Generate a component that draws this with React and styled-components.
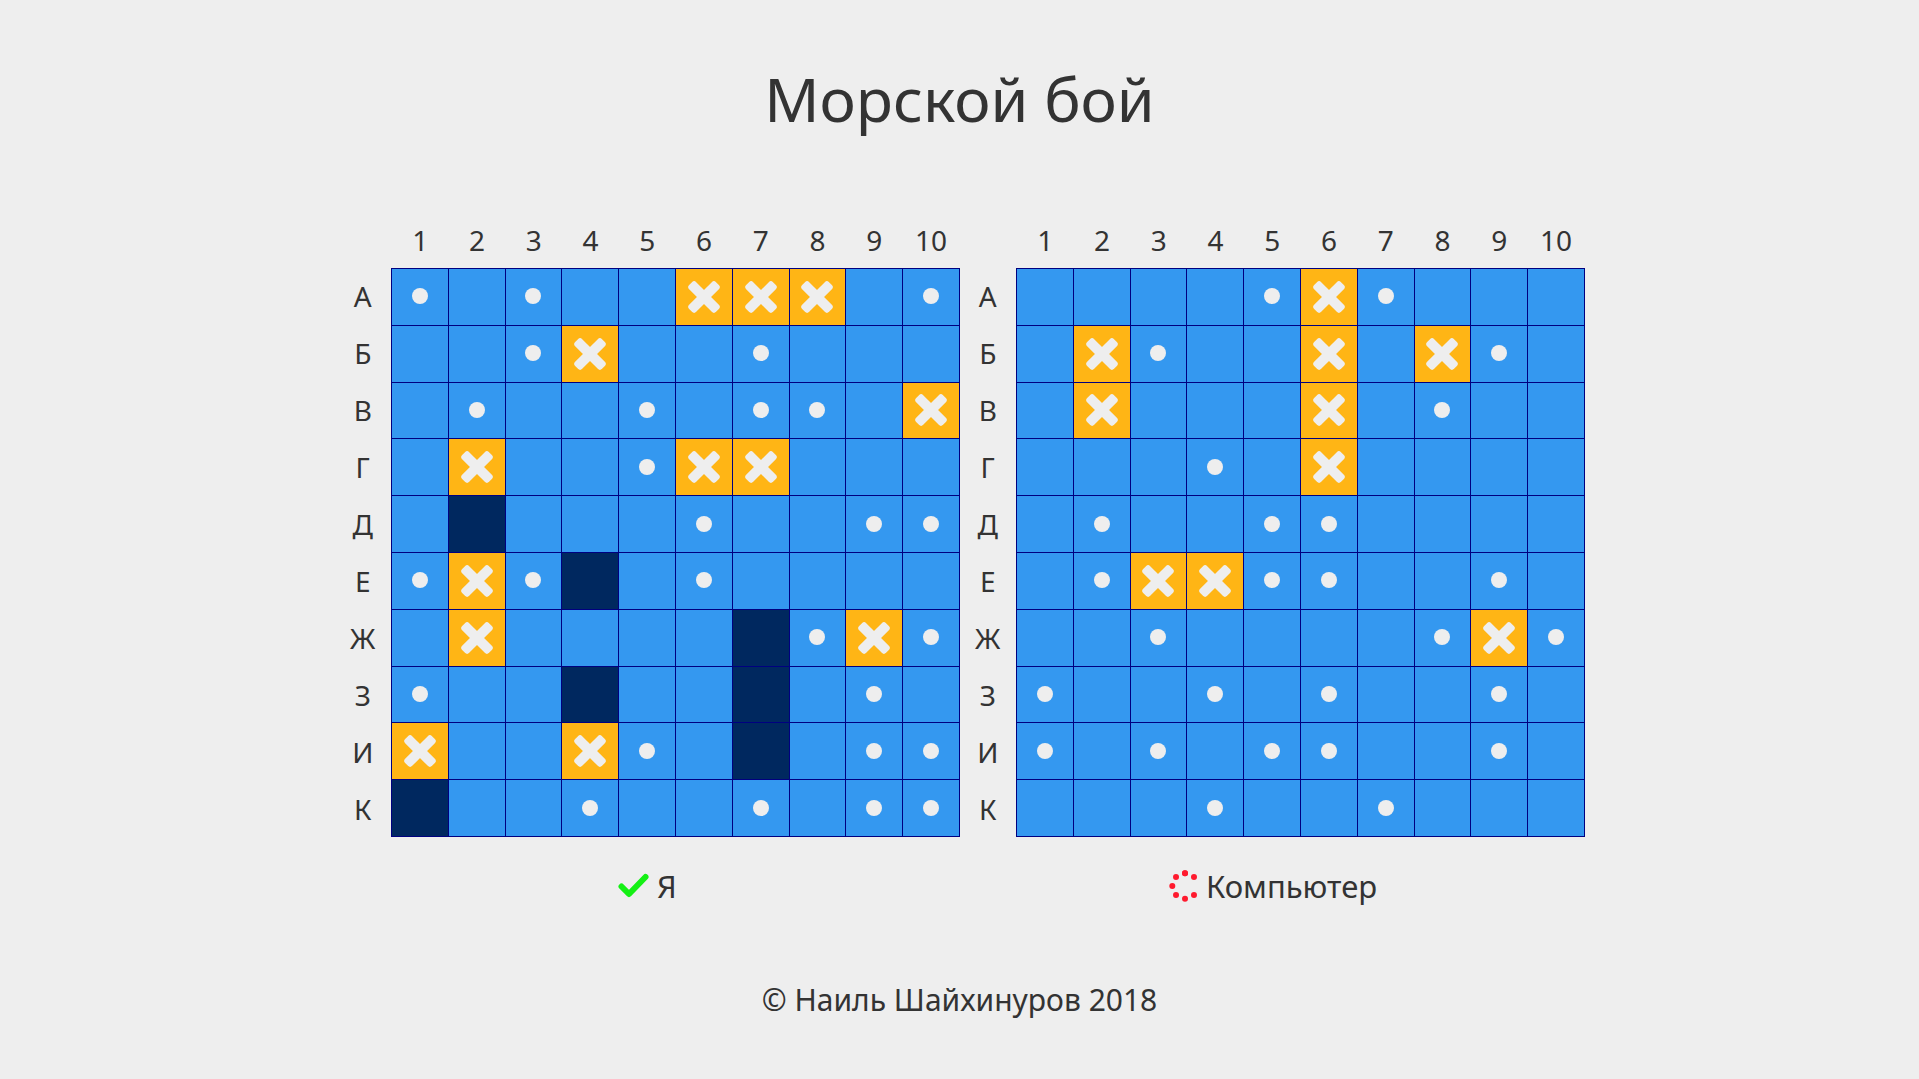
import styled, { createGlobalStyle } from "styled-components";

const COLUMNS = [1, 2, 3, 4, 5, 6, 7, 8, 9, 10];
const LETTERS = ["А", "Б", "В", "Г", "Д", "Е", "Ж", "З", "И", "К"];

const MY_FIELD = [
  "o.o..xxx.o",
  "..ox..o...",
  ".o..o.oo.x",
  ".x..oxx...",
  ".s...o..oo",
  "oxos.o....",
  ".x....soxo",
  "o..s..s.o.",
  "x..xo.s.oo",
  "s..o..o.oo",
];

const ENEMY_FIELD = [
  "....oxo...",
  ".xo..x.xo.",
  ".x...x.o..",
  "...o.x....",
  ".o..oo....",
  ".oxxoo..o.",
  "..o....oxo",
  "o..o.o..o.",
  "o.o.oo..o.",
  "...o..o...",
];

const CELL_COLORS = {
  ".": "#3498f0",
  o: "#3498f0",
  x: "#ffb515",
  s: "#00285f",
};

const SPINNER_DOTS = [45, 90, 135, 180, 225, 270, 315];

const GlobalStyle = createGlobalStyle`
  html, body {
    margin: 0;
    padding: 0;
    background: #eee;
  }
  body {
    color: #333;
    font-family: "Noto Sans", "Open Sans", sans-serif;
  }
`;

const Page = styled.div`
  display: flex;
  flex-direction: column;
  align-items: center;
  padding-top: 60px;
`;

const Title = styled.h1`
  margin: 0 0 71px;
  height: 80px;
  font-size: 61px;
  font-weight: 400;
  line-height: 78px;
`;

const Boards = styled.div`
  display: flex;
  width: 1250px;
`;

const Board = styled.section`
  display: grid;
  grid-template-columns: 56.5px 568.5px;
  grid-template-rows: 57px 569px auto;
  width: 625px;
`;

const Corner = styled.div``;

const Numbers = styled.div`
  display: grid;
  grid-template-columns: repeat(10, 1fr);
  padding-left: 1px;
`;

const Letters = styled.div`
  display: grid;
  grid-template-rows: repeat(10, 1fr);
`;

const Label = styled.div`
  display: flex;
  align-items: center;
  justify-content: center;
  font-size: 28px;
`;

const Field = styled.div`
  display: grid;
  grid-template-columns: repeat(10, 1fr);
  grid-template-rows: repeat(10, 1fr);
  width: 569px;
  border-top: 1px solid #000080;
  border-left: 1px solid #000080;
  box-sizing: border-box;
`;

const Cell = styled.div`
  display: flex;
  align-items: center;
  justify-content: center;
  background: ${(p) => CELL_COLORS[p.$kind]};
  border-right: 1px solid #000080;
  border-bottom: 1px solid #000080;
`;

const Dot = styled.span`
  width: 16px;
  height: 16px;
  margin-bottom: 1px;
  border-radius: 50%;
  background: #eee;
`;

const Status = styled.div`
  grid-column: 1 / 3;
  display: flex;
  align-items: center;
  justify-content: center;
  gap: 7px;
  height: 98px;
  padding-bottom: 2px;
  font-size: 31px;
`;

const CheckIcon = styled.svg`
  margin-right: 1px;
`;

const SpinnerIcon = styled.svg`
  margin: 0 -2px 0 2px;
`;

const Footer = styled.footer`
  margin-top: 43px;
  font-size: 30px;
  line-height: 40px;
`;

const Cross = () => (
  <svg width="34" height="34" viewBox="0 0 34 34">
    <g fill="#eee" transform="rotate(45 17 17)">
      <rect x="-2" y="12" width="38" height="10" rx="3" />
      <rect x="12" y="-2" width="10" height="38" rx="3" />
    </g>
  </svg>
);

const Check = () => (
  <CheckIcon width="32" height="26" viewBox="0 0 32 26">
    <path
      d="M4.5 13.5 L12 21 L28.5 4"
      fill="none"
      stroke="#14f014"
      strokeWidth="6"
      strokeLinecap="round"
      strokeLinejoin="round"
    />
  </CheckIcon>
);

const Spinner = () => (
  <SpinnerIcon width="32" height="32" viewBox="0 0 32 32">
    {SPINNER_DOTS.map((angle) => (
      <circle
        key={angle}
        cx={16 + 12.7 * Math.cos((angle * Math.PI) / 180)}
        cy={16 + 12.7 * Math.sin((angle * Math.PI) / 180)}
        r="3"
        fill="#ff1a2e"
      />
    ))}
    <circle cx="16" cy="3.3" r="3" fill="#ff1a2e" />
  </SpinnerIcon>
);

const GameBoard = ({ field, icon, name }) => (
  <Board>
    <Corner />
    <Numbers>
      {COLUMNS.map((n) => (
        <Label key={n}>{n}</Label>
      ))}
    </Numbers>
    <Letters>
      {LETTERS.map((l) => (
        <Label key={l}>{l}</Label>
      ))}
    </Letters>
    <Field>
      {field.map((row, y) =>
        row.split("").map((kind, x) => (
          <Cell key={`${y}-${x}`} $kind={kind}>
            {kind === "o" && <Dot />}
            {kind === "x" && <Cross />}
          </Cell>
        ))
      )}
    </Field>
    <Status>
      {icon}
      <span>{name}</span>
    </Status>
  </Board>
);

const App = () => (
  <Page>
    <GlobalStyle />
    <Title>Морской бой</Title>
    <Boards>
      <GameBoard field={MY_FIELD} icon={<Check />} name="Я" />
      <GameBoard field={ENEMY_FIELD} icon={<Spinner />} name="Компьютер" />
    </Boards>
    <Footer>© Наиль Шайхинуров 2018</Footer>
  </Page>
);

export default App;
